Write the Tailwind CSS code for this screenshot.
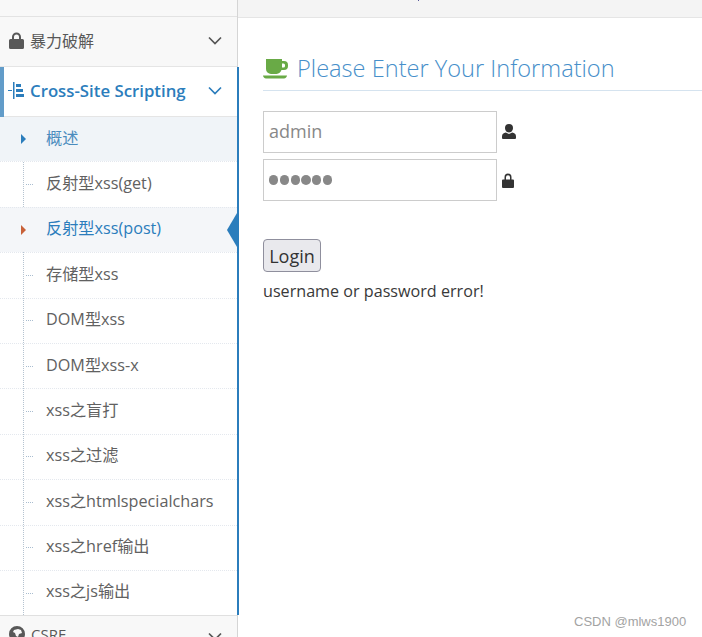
<html>
<head>
  <meta charset="utf-8">
  <script src="https://cdn.jsdelivr.net/npm/@tailwindcss/browser@4"></script>
</head>
<body class="relative w-[702px] h-[637px] overflow-hidden bg-white flex font-['Open_Sans','Noto_Sans_CJK_SC',sans-serif]">
  <!-- sidebar -->
  <div class="w-[238px] h-full shrink-0 bg-[#f8f8f8] border-r border-[#d5d5d5] flex flex-col">
    <div class="h-[17px] shrink-0 border-b border-[#e3e3e3]"></div>

    <div class="h-[50px] shrink-0 pl-[9px] pr-[15px] pb-[2px] flex items-center border-b border-[#e5e5e5] text-[#585858] text-[16px]">
      <svg class="w-[15px] h-[17px] mr-[6px] mb-[1px]" viewBox="0 0 15 17" fill="#585858"><path d="M3 7V5a4.500 4.500 0 0 1 9 0v2h1.500a1.500 1.500 0 0 1 1.500 1.500V15.500a1.500 1.500 0 0 1-1.500 1.500h-12A1.500 1.500 0 0 1 0 15.500V8.500A1.500 1.500 0 0 1 1.500 7zM5 7h5V5a2.500 2.500 0 0 0-5 0z"/></svg>
      <span class="flex-1">暴力破解</span>
      <svg class="w-[14px] h-[9px]" viewBox="0 0 14 9" fill="none" stroke="#555" stroke-width="1.700"><path d="M1 1.500l6 6 6-6"/></svg>
    </div>

    <div class="relative bg-white flex-1 flex flex-col mr-[-2px] border-r-2 border-[#2b7dbc]">
      <div class="h-[50px] shrink-0 pl-[8px] pr-[15px] pb-[2px] flex items-center border-b border-[#e5e5e5] text-[#2b7dbc] text-[16.800px] font-semibold">
        <svg class="w-[17px] h-[17px] mr-[5px]" viewBox="0 0 17 17" fill="#2b7dbc"><path d="M5 0h1.500v17H5zM0 8h4v1H0zM8 2h5v3H8zM8 7h7v3H8zM8 12h8v3H8z"/></svg>
        <span class="flex-1">Cross-Site Scripting</span>
        <svg class="w-[14px] h-[9px]" viewBox="0 0 14 9" fill="none" stroke="#2b7dbc" stroke-width="1.700"><path d="M1 1.500l6 6 6-6"/></svg>
      </div>
      <span class="absolute left-0 top-0 w-[4px] h-[50px] bg-[#629cc9]"></span>

      <ul class="relative flex-1 flex flex-col text-[16.200px] text-[#616161]">
        <span class="absolute left-[23px] top-0 bottom-0 border-l border-dotted border-[#b5c3d0]"></span>

        <li class="relative h-[44.400px] shrink-0 flex items-center pl-[46px] pb-[3px] bg-[#f0f4f8] text-[#4a8bbd]">
          <span class="absolute left-[21px] mt-[3px] w-0 h-0 border-y-[5px] border-y-transparent border-l-[5px] border-l-[#2b7dbc]"></span>
          概述
        </li>
        <li class="relative h-[45.400px] shrink-0 flex items-center pl-[46px] pb-[3px] border-t border-dotted border-[#e4e8ee]">
          <span class="absolute left-[26px] mt-[3px] w-[7px] border-t border-dotted border-[#a9bdd0]"></span>
          反射型xss(get)
        </li>
        <li class="relative h-[45.400px] shrink-0 flex items-center pl-[46px] pb-[3px] bg-[#f4f6f9] text-[#2b7dbc] border-t border-dotted border-[#e4e8ee]">
          <span class="absolute left-[21px] mt-[3px] w-0 h-0 border-y-[5px] border-y-transparent border-l-[5px] border-l-[#c86139]"></span>
          反射型xss(post)
          <span class="absolute right-0 mt-[3px] w-0 h-0 border-y-[17px] border-y-transparent border-r-[10px] border-r-[#2b7dbc]"></span>
        </li>
        <li class="relative h-[45.400px] shrink-0 flex items-center pl-[46px] pb-[3px] border-t border-dotted border-[#e4e8ee]">
          <span class="absolute left-[26px] mt-[3px] w-[7px] border-t border-dotted border-[#a9bdd0]"></span>
          存储型xss
        </li>
        <li class="relative h-[45.400px] shrink-0 flex items-center pl-[46px] pb-[3px] border-t border-dotted border-[#e4e8ee]">
          <span class="absolute left-[26px] mt-[3px] w-[7px] border-t border-dotted border-[#a9bdd0]"></span>
          DOM型xss
        </li>
        <li class="relative h-[45.400px] shrink-0 flex items-center pl-[46px] pb-[3px] border-t border-dotted border-[#e4e8ee]">
          <span class="absolute left-[26px] mt-[3px] w-[7px] border-t border-dotted border-[#a9bdd0]"></span>
          DOM型xss-x
        </li>
        <li class="relative h-[45.400px] shrink-0 flex items-center pl-[46px] pb-[3px] border-t border-dotted border-[#e4e8ee]">
          <span class="absolute left-[26px] mt-[3px] w-[7px] border-t border-dotted border-[#a9bdd0]"></span>
          xss之盲打
        </li>
        <li class="relative h-[45.400px] shrink-0 flex items-center pl-[46px] pb-[3px] border-t border-dotted border-[#e4e8ee]">
          <span class="absolute left-[26px] mt-[3px] w-[7px] border-t border-dotted border-[#a9bdd0]"></span>
          xss之过滤
        </li>
        <li class="relative h-[45.400px] shrink-0 flex items-center pl-[46px] pb-[3px] border-t border-dotted border-[#e4e8ee]">
          <span class="absolute left-[26px] mt-[3px] w-[7px] border-t border-dotted border-[#a9bdd0]"></span>
          xss之htmlspecialchars
        </li>
        <li class="relative h-[45.400px] shrink-0 flex items-center pl-[46px] pb-[3px] border-t border-dotted border-[#e4e8ee]">
          <span class="absolute left-[26px] mt-[3px] w-[7px] border-t border-dotted border-[#a9bdd0]"></span>
          xss之href输出
        </li>
        <li class="relative h-[45.400px] shrink-0 flex items-center pl-[46px] pb-[3px] border-t border-dotted border-[#e4e8ee]">
          <span class="absolute left-[26px] mt-[3px] w-[7px] border-t border-dotted border-[#a9bdd0]"></span>
          xss之js输出
        </li>
      </ul>
    </div>

    <div class="h-[22px] shrink-0 pl-[9px] pr-[15px] pt-[8px] flex items-start border-t border-[#e0e0e0] text-[#585858] text-[15px] leading-[20px]">
      <svg class="w-[16px] h-[16px] mr-[6px] mt-[2px] shrink-0" viewBox="0 0 16 16" fill="#585858"><path d="M8 0a8 8 0 1 0 0 16A8 8 0 0 0 8 0zm1 3l3 1 1 3-3 1-1 3-2-1-1-3-2-1 1-2z"/></svg>
      <span class="flex-1">CSRF</span>
      <svg class="w-[14px] h-[9px] mt-[8px]" viewBox="0 0 14 9" fill="none" stroke="#555" stroke-width="1.700"><path d="M1 1.500l6 6 6-6"/></svg>
    </div>
  </div>

  <!-- main -->
  <div class="flex-1 min-w-0 flex flex-col">
    <div class="h-[18px] shrink-0 bg-[#f4f4f4] border-b border-[#e5e5e5] relative">
      <span class="absolute left-[180px] top-0 w-[1px] h-[1px] bg-[#5a5a9a]"></span>
    </div>

    <div class="pl-[25px]">
      <div class="mt-[33px] h-[40px] flex items-start border-b border-[#d5e3ef]">
        <svg class="w-[25px] h-[20px] mt-[8px] shrink-0" viewBox="0 0 25 20" fill="#69aa46"><path d="M3 0h16v2h2a4 4 0 0 1 4 4v1a4 4 0 0 1-4 4h-2.500a6 6 0 0 1-5 4H8a5 5 0 0 1-5-5zM19 4.500V8.500h1.500a1.500 1.500 0 0 0 1.500-1.500V6a1.500 1.500 0 0 0-1.500-1.500zM0 16.500h24c0 1.500-1.500 3-3 3H3c-1.500 0-3-1.500-3-3z"/></svg>
        <h1 class="ml-[9px] mt-[1px] text-[23.600px] leading-[32px] font-light text-[#478fca] whitespace-nowrap">Please Enter Your Information</h1>
      </div>

      <div class="mt-[20px] flex items-center h-[42px]">
        <div class="w-[234px] h-[42px] border border-[#ccc] pl-[5px] pb-[2px] flex items-center text-[18px] text-[#888]">admin</div>
        <svg class="ml-[5px] mb-[2px] w-[14px] h-[15px]" viewBox="0 0 14 15" fill="#333"><path d="M7 0a4 4 0 0 1 4 4c0 1.600-.8 3.200-2 4l-2 .6-2-.6C3.800 7.200 3 5.600 3 4a4 4 0 0 1 4-4zM3.800 8.500L7 10l3.200-1.500c2.300.3 3.800 1.500 3.800 4V14a1 1 0 0 1-1 1H1a1 1 0 0 1-1-1v-1.500c0-2.500 1.500-3.700 3.800-4z"/></svg>
      </div>
      <div class="mt-[6px] flex items-center h-[42px]">
        <div class="w-[234px] h-[42px] border border-[#ccc] pl-[5px] flex items-center gap-[1.500px]">
          <span class="w-[9.300px] h-[9.300px] rounded-full bg-[#888]"></span>
          <span class="w-[9.300px] h-[9.300px] rounded-full bg-[#888]"></span>
          <span class="w-[9.300px] h-[9.300px] rounded-full bg-[#888]"></span>
          <span class="w-[9.300px] h-[9.300px] rounded-full bg-[#888]"></span>
          <span class="w-[9.300px] h-[9.300px] rounded-full bg-[#888]"></span>
          <span class="w-[9.300px] h-[9.300px] rounded-full bg-[#888]"></span>
        </div>
        <svg class="ml-[5px] w-[12px] h-[15px]" viewBox="0 0 12 14" preserveAspectRatio="none" fill="#333"><path d="M2.500 6V4a3.500 3.500 0 0 1 7 0v2H11a1 1 0 0 1 1 1v6a1 1 0 0 1-1 1H1a1 1 0 0 1-1-1V7a1 1 0 0 1 1-1zM4 6h4V4a2 2 0 0 0-4 0z"/></svg>
      </div>

      <button class="mt-[38px] block w-[58px] h-[33px] bg-[#e9e9ed] border border-[#8f8f9d] rounded-[4px] text-[18px] leading-none text-[#333]">Login</button>
      <p class="mt-[8px] text-[16.150px] leading-[22px] text-[#393939]">username or password error!</p>
    </div>
  </div>

  <span class="absolute left-[574px] top-[613px] text-[13px] leading-[18px] text-[#a3a3a3] font-['Liberation_Sans',sans-serif]">CSDN @mlws1900</span>
</body>
</html>
